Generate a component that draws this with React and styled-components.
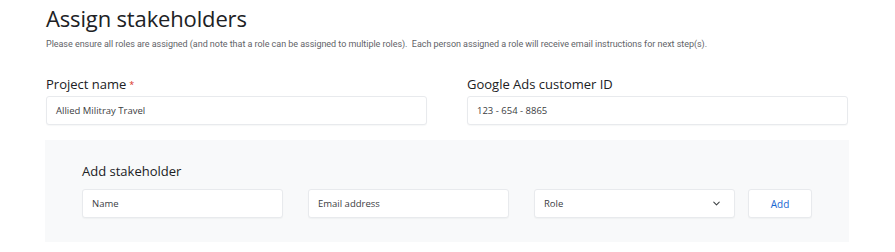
import React from "react";
import styled, { createGlobalStyle } from "styled-components";
import { ChevronDown } from "lucide-react";

const Global = createGlobalStyle`
  html, body { margin: 0; padding: 0; background: #ffffff; }
  body { font-family: "Open Sans", "Liberation Sans", sans-serif; color: #202124; }
  * { box-sizing: border-box; }
`;

const Page = styled.div`
  width: 895px;
  padding: 4px 0 0 45px;
`;

const Inner = styled.div`
  width: 804px;
`;

const Title = styled.h1`
  margin: 0 0 0 1px;
  font-family: "Open Sans", sans-serif;
  font-weight: 400;
  font-size: 22px;
  line-height: 28px;
  letter-spacing: -0.15px;
  color: #202124;
`;

const Subtitle = styled.p`
  margin: 6px 0 0 1px;
  font-family: Roboto, sans-serif;
  font-size: 9px;
  line-height: 12px;
  letter-spacing: -0.04px;
  color: #5f6368;
`;

const FieldsRow = styled.div`
  display: grid;
  grid-template-columns: 381px 381px;
  column-gap: 40px;
  padding: 0 1px;
  margin-top: 26px;
`;

const Field = styled.div`
  display: flex;
  flex-direction: column;
  gap: 3px;
`;

const Label = styled.label`
  font-family: "Open Sans", sans-serif;
  font-size: 13px;
  line-height: 17px;
  color: #202124;
`;

const Required = styled.span`
  color: #d93025;
  margin-left: 3px;
  font-size: 9px;
  vertical-align: top;
`;

const Box = styled.div`
  height: 29px;
  display: flex;
  align-items: center;
  padding: 0 9px;
  background: #ffffff;
  border: 1px solid #e8eaed;
  border-radius: 3px;
  box-shadow: 0 1px 1px rgba(60, 64, 67, 0.04);
  font-family: "Open Sans", sans-serif;
  font-size: 9.5px;
  color: #3c4043;
`;

const Panel = styled.section`
  margin-top: 15px;
  background: #f8f9fa;
  padding: 23px 37px 24px;
`;

const PanelTitle = styled.h2`
  margin: 0;
  font-family: "Open Sans", sans-serif;
  font-weight: 400;
  font-size: 13px;
  line-height: 17px;
  color: #202124;
`;

const AddRow = styled.div`
  display: flex;
  gap: 25px;
  margin-top: 9px;

  & > ${Box} {
    width: 201px;
    flex: none;
  }
`;

const SelectBox = styled(Box)`
  justify-content: space-between;
  padding-right: 12px;
`;

const AddButton = styled.button`
  flex: none;
  width: 64px;
  height: 29px;
  margin-left: -12px;
  background: #ffffff;
  border: 1px solid #e8eaed;
  border-radius: 3px;
  box-shadow: 0 1px 1px rgba(60, 64, 67, 0.04);
  font-family: "Open Sans", sans-serif;
  font-size: 10px;
  font-weight: 500;
  color: #1967d2;
  cursor: pointer;
`;

export default function App() {
  return (
    <>
      <Global />
      <Page>
        <Inner>
          <Title>Assign stakeholders</Title>
          <Subtitle>
            Please ensure all roles are assigned (and note that a role can be assigned to multiple roles).&nbsp; Each
            person assigned a role will receive email instructions for next step(s).
          </Subtitle>
          <FieldsRow>
            <Field>
              <Label>
                Project name<Required>*</Required>
              </Label>
              <Box>Allied Militray Travel</Box>
            </Field>
            <Field>
              <Label>Google Ads customer ID</Label>
              <Box>123 - 654 - 8865</Box>
            </Field>
          </FieldsRow>
          <Panel>
            <PanelTitle>Add stakeholder</PanelTitle>
            <AddRow>
              <Box>Name</Box>
              <Box>Email address</Box>
              <SelectBox>
                Role
                <ChevronDown size={11} strokeWidth={2.2} color="#3c4043" />
              </SelectBox>
              <AddButton>Add</AddButton>
            </AddRow>
          </Panel>
        </Inner>
      </Page>
    </>
  );
}
